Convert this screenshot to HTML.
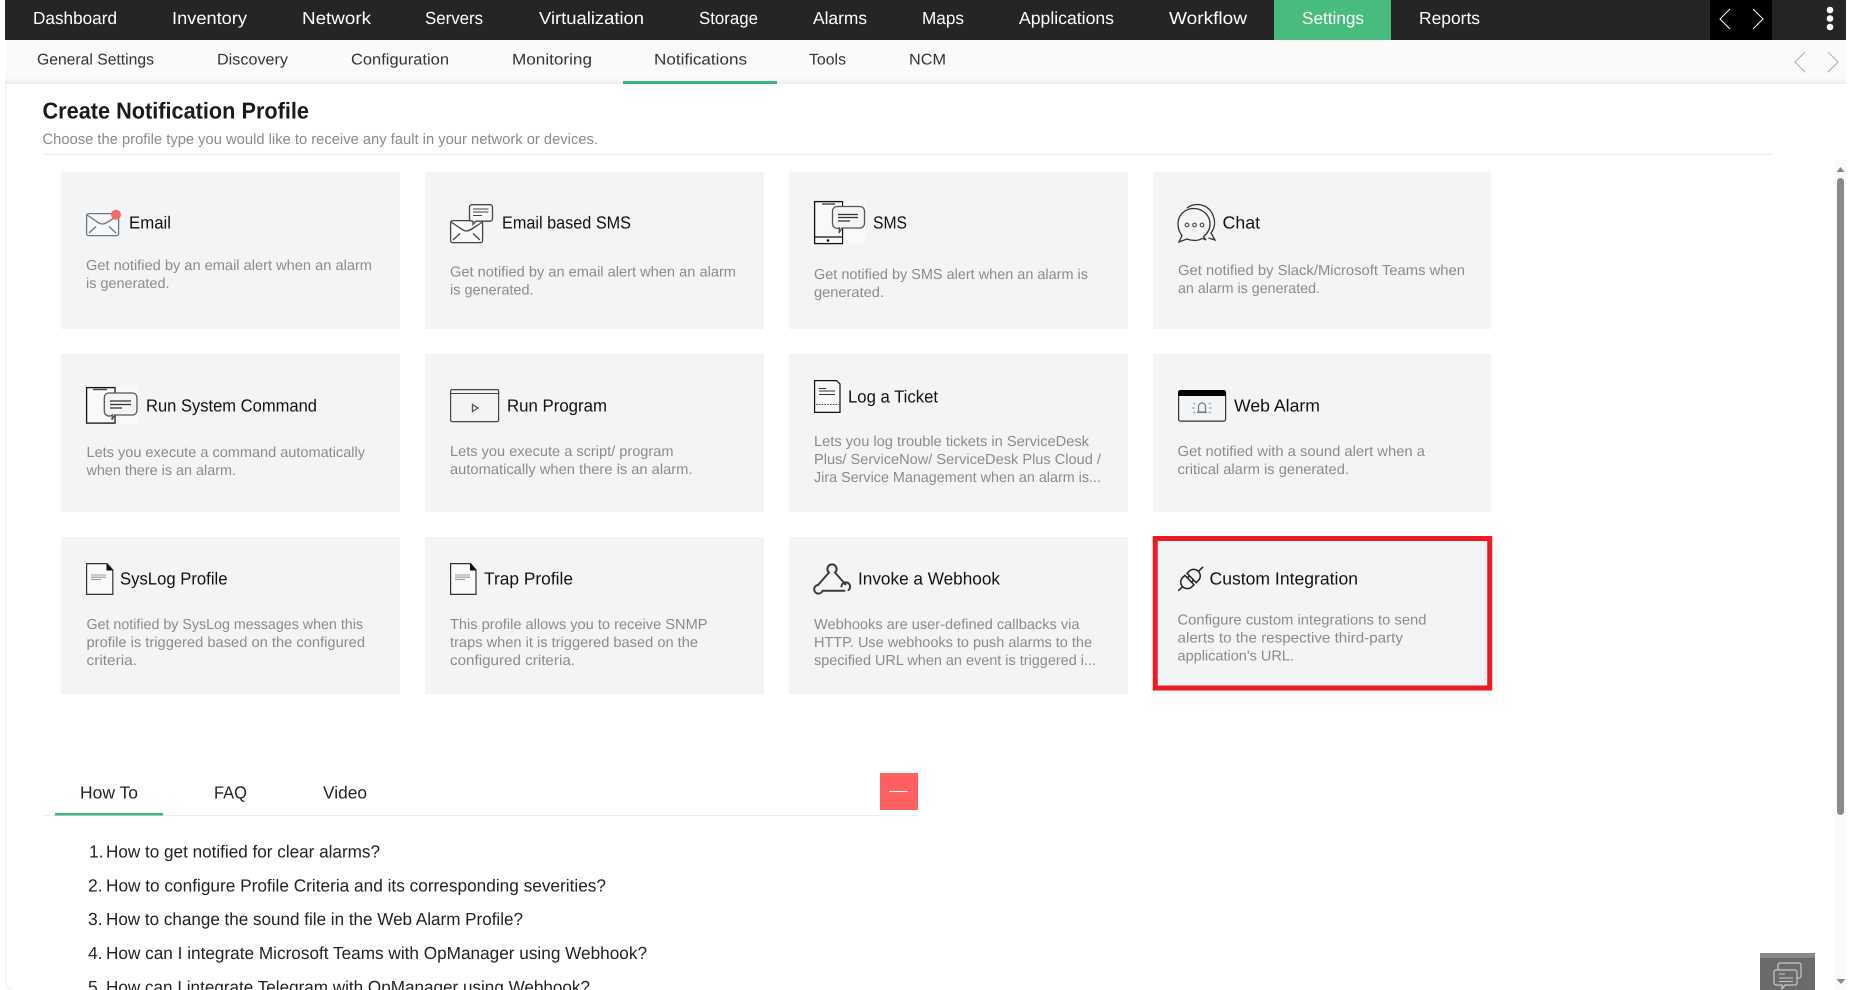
<!DOCTYPE html>
<html><head><meta charset="utf-8"><title>Create Notification Profile</title>
<style>
html,body{margin:0;padding:0;background:#fff;overflow:hidden}
svg{display:block}
text{font-family:"Liberation Sans",sans-serif;text-rendering:geometricPrecision}
.n{font-size:17.5px;fill:#fff}
.s{font-size:15.5px;fill:#333}
.t{font-size:17.5px;fill:#111}
.d{font-size:14.5px;fill:#8b8b8b}
.l{font-size:17.5px;fill:#222}
.i{fill:none;stroke:#333;stroke-width:1.3}
.g{fill:none;stroke:#6f7682;stroke-width:1.3}
</style></head><body>
<svg width="1852" height="990" viewBox="0 0 1852 990" xmlns="http://www.w3.org/2000/svg">
<rect width="1852" height="990" fill="#fff"/>
<path d="M5.5 84V980a10 10 0 0 0 8 10" fill="none" stroke="#f1f1f1"/>
<!-- top bar -->
<rect x="5" y="0" width="1841" height="40" fill="#252525"/>
<rect x="1274" y="0" width="117" height="40" fill="#48bb7f"/>
<rect x="1710" y="0" width="62" height="40" fill="#000"/>
<g class="n">
<text class="n" x="33" y="24" textLength="84" lengthAdjust="spacingAndGlyphs">Dashboard</text>
<text class="n" x="172" y="24" textLength="75" lengthAdjust="spacingAndGlyphs">Inventory</text>
<text class="n" x="302" y="24" textLength="69" lengthAdjust="spacingAndGlyphs">Network</text>
<text class="n" x="425" y="24" textLength="58" lengthAdjust="spacingAndGlyphs">Servers</text>
<text class="n" x="539" y="24" textLength="105" lengthAdjust="spacingAndGlyphs">Virtualization</text>
<text class="n" x="699" y="24" textLength="59" lengthAdjust="spacingAndGlyphs">Storage</text>
<text class="n" x="813" y="24" textLength="54" lengthAdjust="spacingAndGlyphs">Alarms</text>
<text class="n" x="922" y="24" textLength="42" lengthAdjust="spacingAndGlyphs">Maps</text>
<text class="n" x="1019" y="24" textLength="95" lengthAdjust="spacingAndGlyphs">Applications</text>
<text class="n" x="1169" y="24" textLength="78" lengthAdjust="spacingAndGlyphs">Workflow</text>
<text class="n" x="1302" y="24" textLength="62" lengthAdjust="spacingAndGlyphs">Settings</text>
<text class="n" x="1419" y="24" textLength="61" lengthAdjust="spacingAndGlyphs">Reports</text>
</g>
<path d="M1730 9l-10 10 10 10M1753 9l10 10-10 10" fill="none" stroke="#fff" stroke-width="1"/>
<circle cx="1830" cy="10" r="3.3" fill="#fff"/><circle cx="1830" cy="18.5" r="3.3" fill="#fff"/><circle cx="1830" cy="27" r="3.3" fill="#fff"/>
<!-- sub bar -->
<defs><linearGradient id="sh" x1="0" y1="0" x2="0" y2="1"><stop offset="0" stop-color="#fafafa"/><stop offset="1" stop-color="#ececec"/></linearGradient></defs>
<rect x="5" y="40" width="1841" height="38" fill="#fafafa"/>
<rect x="5" y="78" width="1841" height="6" fill="url(#sh)"/>
<rect x="623" y="81" width="154" height="3" fill="#3fb27a"/>
<text class="s" x="37" y="64.500" textLength="117" lengthAdjust="spacingAndGlyphs">General Settings</text>
<text class="s" x="217" y="64.500" textLength="71" lengthAdjust="spacingAndGlyphs">Discovery</text>
<text class="s" x="351" y="64.500" textLength="98" lengthAdjust="spacingAndGlyphs">Configuration</text>
<text class="s" x="512" y="64.500" textLength="80" lengthAdjust="spacingAndGlyphs">Monitoring</text>
<text class="s" x="654" y="64.500" textLength="93" lengthAdjust="spacingAndGlyphs">Notifications</text>
<text class="s" x="809" y="64.500" textLength="37" lengthAdjust="spacingAndGlyphs">Tools</text>
<text class="s" x="909" y="64.500" textLength="37" lengthAdjust="spacingAndGlyphs">NCM</text>
<path d="M1805 52l-10 10 10 10M1828 52l10 10-10 10" fill="none" stroke="#aaa" stroke-width="1"/>
<!-- heading -->
<text x="42.5" y="118.5" font-size="23" font-weight="700" fill="#1a1a1a" textLength="266.5" lengthAdjust="spacingAndGlyphs">Create Notification Profile</text>
<text class="d" x="42.5" y="144" textLength="555.5" lengthAdjust="spacingAndGlyphs" style="font-size:15px">Choose the profile type you would like to receive any fault in your network or devices.</text>
<rect x="42.5" y="154" width="1729.5" height="1" fill="#ececec"/>
<!-- cards -->
<g fill="#f3f4f6">
<rect x="61" y="172" width="339" height="157"/><rect x="425" y="172" width="339" height="157"/><rect x="789" y="172" width="339" height="157"/><rect x="1153" y="172" width="338" height="157"/>
<rect x="61" y="354" width="339" height="158"/><rect x="425" y="354" width="339" height="158"/><rect x="789" y="354" width="339" height="158"/><rect x="1153" y="354" width="338" height="158"/>
<rect x="61" y="537" width="339" height="157"/><rect x="425" y="537" width="339" height="157"/><rect x="789" y="537" width="339" height="157"/><rect x="1153" y="537" width="338" height="157"/>
</g>
<rect x="1155.25" y="538.5" width="334.5" height="149.5" fill="none" stroke="#ed1c24" stroke-width="5"/>
<!-- card text row 1 -->
<text class="t" x="129" y="228.500" textLength="42" lengthAdjust="spacingAndGlyphs">Email</text>
<text class="d" x="86" y="270" textLength="286" lengthAdjust="spacingAndGlyphs">Get notified by an email alert when an alarm</text>
<text class="d" x="86" y="288" textLength="83.5" lengthAdjust="spacingAndGlyphs">is generated.</text>
<text class="t" x="502" y="228.500" textLength="129" lengthAdjust="spacingAndGlyphs">Email based SMS</text>
<text class="d" x="450" y="276.500" textLength="286" lengthAdjust="spacingAndGlyphs">Get notified by an email alert when an alarm</text>
<text class="d" x="450" y="294.500" textLength="83.5" lengthAdjust="spacingAndGlyphs">is generated.</text>
<text class="t" x="873" y="228.500" textLength="34" lengthAdjust="spacingAndGlyphs">SMS</text>
<text class="d" x="814" y="279" textLength="274" lengthAdjust="spacingAndGlyphs">Get notified by SMS alert when an alarm is</text>
<text class="d" x="814" y="297" textLength="70" lengthAdjust="spacingAndGlyphs">generated.</text>
<text class="t" x="1222.5" y="228.500" textLength="37.5" lengthAdjust="spacingAndGlyphs">Chat</text>
<text class="d" x="1178" y="275" textLength="287" lengthAdjust="spacingAndGlyphs">Get notified by Slack/Microsoft Teams when</text>
<text class="d" x="1178" y="293" textLength="142" lengthAdjust="spacingAndGlyphs">an alarm is generated.</text>
<!-- row 2 -->
<text class="t" x="146" y="411.500" textLength="171" lengthAdjust="spacingAndGlyphs">Run System Command</text>
<text class="d" x="86.5" y="457" textLength="278.5" lengthAdjust="spacingAndGlyphs">Lets you execute a command automatically</text>
<text class="d" x="86.5" y="475" textLength="149.5" lengthAdjust="spacingAndGlyphs">when there is an alarm.</text>
<text class="t" x="507" y="411.500" textLength="100" lengthAdjust="spacingAndGlyphs">Run Program</text>
<text class="d" x="450" y="456" textLength="223.5" lengthAdjust="spacingAndGlyphs">Lets you execute a script/ program</text>
<text class="d" x="450" y="474" textLength="242.5" lengthAdjust="spacingAndGlyphs">automatically when there is an alarm.</text>
<text class="t" x="848" y="402.500" textLength="90" lengthAdjust="spacingAndGlyphs">Log a Ticket</text>
<text class="d" x="814" y="446" textLength="275" lengthAdjust="spacingAndGlyphs">Lets you log trouble tickets in ServiceDesk</text>
<text class="d" x="814" y="464" textLength="287" lengthAdjust="spacingAndGlyphs">Plus/ ServiceNow/ ServiceDesk Plus Cloud /</text>
<text class="d" x="814" y="482" textLength="287" lengthAdjust="spacingAndGlyphs">Jira Service Management when an alarm is...</text>
<text class="t" x="1234" y="411.500" textLength="86" lengthAdjust="spacingAndGlyphs">Web Alarm</text>
<text class="d" x="1177.5" y="456" textLength="247.5" lengthAdjust="spacingAndGlyphs">Get notified with a sound alert when a</text>
<text class="d" x="1177.5" y="474" textLength="171.5" lengthAdjust="spacingAndGlyphs">critical alarm is generated.</text>
<!-- row 3 -->
<text class="t" x="120" y="584.500" textLength="107.5" lengthAdjust="spacingAndGlyphs">SysLog Profile</text>
<text class="d" x="86.5" y="629" textLength="276.5" lengthAdjust="spacingAndGlyphs">Get notified by SysLog messages when this</text>
<text class="d" x="86.5" y="647" textLength="278.5" lengthAdjust="spacingAndGlyphs">profile is triggered based on the configured</text>
<text class="d" x="86.5" y="665" textLength="50.5" lengthAdjust="spacingAndGlyphs">criteria.</text>
<text class="t" x="484" y="584.500" textLength="89" lengthAdjust="spacingAndGlyphs">Trap Profile</text>
<text class="d" x="450" y="629" textLength="257.5" lengthAdjust="spacingAndGlyphs">This profile allows you to receive SNMP</text>
<text class="d" x="450" y="647" textLength="248" lengthAdjust="spacingAndGlyphs">traps when it is triggered based on the</text>
<text class="d" x="450" y="665" textLength="125" lengthAdjust="spacingAndGlyphs">configured criteria.</text>
<text class="t" x="858" y="584.500" textLength="142" lengthAdjust="spacingAndGlyphs">Invoke a Webhook</text>
<text class="d" x="814" y="629" textLength="265.5" lengthAdjust="spacingAndGlyphs">Webhooks are user-defined callbacks via</text>
<text class="d" x="814" y="647" textLength="278" lengthAdjust="spacingAndGlyphs">HTTP. Use webhooks to push alarms to the</text>
<text class="d" x="814" y="665" textLength="282" lengthAdjust="spacingAndGlyphs">specified URL when an event is triggered i...</text>
<text class="t" x="1209.5" y="584.500" textLength="148.5" lengthAdjust="spacingAndGlyphs">Custom Integration</text>
<text class="d" x="1177.5" y="624.7" textLength="249" lengthAdjust="spacingAndGlyphs">Configure custom integrations to send</text>
<text class="d" x="1177.5" y="642.7" textLength="225.5" lengthAdjust="spacingAndGlyphs">alerts to the respective third-party</text>
<text class="d" x="1177.5" y="660.7" textLength="116.5" lengthAdjust="spacingAndGlyphs">application's URL.</text>
<!-- icons: email -->
<rect x="86.6" y="213.6" width="32" height="22" rx="2" fill="#f7f8fa" stroke="#6f7682" stroke-width="1.3"/>
<path class="g" d="M87 215c8 5 12 9 15.500 9s8-4 16-9M89 233l7-6.500M116 233l-7-6.500"/>
<circle cx="116" cy="214.700" r="5" fill="#f56b6b"/>
<!-- email sms -->
<rect x="450.600" y="220.600" width="32" height="22" rx="2" fill="#f7f8fa" stroke="#444" stroke-width="1.300"/>
<path d="M451 222c8 5 12 9 15.500 9s8-4 16-9M453 240l7-6.500M480 240l-7-6.500" fill="none" stroke="#444" stroke-width="1.300"/>
<path d="M472 204.700h18a2.500 2.500 0 0 1 2.500 2.500v11.500a2.500 2.500 0 0 1-2.500 2.500h-14l-3 3v-3h-1a2.500 2.500 0 0 1-2.500-2.500v-11.500a2.500 2.500 0 0 1 2.500-2.500z" fill="#f7f8fa" stroke="#444" stroke-width="1.300"/>
<path d="M473 209h15.500M473 212h15.500M473 215.500h9" stroke="#444" stroke-width="1.100" fill="none"/>
<!-- sms -->
<rect x="814.600" y="201.600" width="28" height="42" fill="#f9f9fa" stroke="#111" stroke-width="1.300"/>
<path d="M822 204h13" stroke="#444" stroke-width="1.400"/><path d="M815 237h27" stroke="#111" stroke-width="1.200"/><circle cx="828" cy="240.500" r="1.300" fill="#111"/>
<rect x="843.300" y="201" width="21.700" height="43" fill="#f9f9fa"/>
<path d="M837 206.500h23a4.500 4.500 0 0 1 4.500 4.500v12.500a4.500 4.500 0 0 1-4.500 4.500h-18l-3 5 .5-5a5 5 0 0 1-7-4.500v-12.500a4.500 4.500 0 0 1 4.500-4.500z" fill="#f5f5f6" stroke="#555" stroke-width="1.300"/>
<path d="M838 214.500h20M838 217.500h20M838 221h12" stroke="#333" stroke-width="1.200" fill="none"/>
<!-- chat -->
<path class="i" d="M1187 208c8-6 20-4 25 5 4 8 3 15-1 20l4 7-6.500-2"/>
<path d="M1193.500 208.500c-9 0-15.500 7-15.500 15.500 0 5 2 9 4 11.500l-3 6.500 8-3c5 2 11 2 15-.5 1 0 4 1.500 4 1.500l-2.500-3.500c4-3 6.500-7.500 6.500-12.500 0-8.500-7-15.500-16.500-15.500z" fill="#f3f4f6" stroke="#333" stroke-width="1.300"/>
<g fill="none" stroke="#555" stroke-width="1.200"><circle cx="1187" cy="225" r="1.800"/><circle cx="1194.500" cy="225" r="1.800"/><circle cx="1202" cy="225" r="1.800"/></g>
<!-- run system -->
<rect x="86.600" y="387.600" width="28.500" height="35.500" fill="#f9f9fa" stroke="#111" stroke-width="1.300"/>
<path d="M93 389.500h14" stroke="#444" stroke-width="1.400"/>
<rect x="115.800" y="387" width="22.200" height="37" fill="#f9f9fa"/>
<path d="M108.500 393h24a4.500 4.500 0 0 1 4.500 4.500v13a4.500 4.500 0 0 1-4.500 4.500h-18l-2.500 5 .3-5a5 5 0 0 1-8-4.500v-13a4.500 4.500 0 0 1 4.200-4.500z" fill="#f5f5f6" stroke="#555" stroke-width="1.300"/>
<path d="M110 401h21M110 404.500h21M110 408h12" stroke="#333" stroke-width="1.200" fill="none"/>
<!-- run program -->
<rect x="450.600" y="389.600" width="48" height="32" rx="1.500" fill="#f3f4f6" stroke="#444" stroke-width="1.200"/>
<path d="M451 393.500h47" stroke="#444" stroke-width="1"/>
<path d="M472.500 404.500l5.500 3.500-5.500 3.500z" fill="none" stroke="#555" stroke-width="1.300"/>
<!-- log a ticket -->
<path d="M814.600 380.600h22l3.400 3.400v28.400h-25.400z" fill="#f8f9fa" stroke="#111" stroke-width="1.200"/>
<path d="M819 388.500h7M819 391h16M819 394.500h16" stroke="#333" stroke-width="1.100" fill="none"/>
<path d="M816 404.500h23" stroke="#444" stroke-width="1" stroke-dasharray="1.600 1.200"/>
<!-- web alarm -->
<rect x="1178.600" y="390.600" width="47" height="30.500" rx="2" fill="#f3f4f6" stroke="#333" stroke-width="1.200"/>
<path d="M1178 396v-3.500a2.500 2.500 0 0 1 2.500-2.500h43a2.500 2.500 0 0 1 2.500 2.500v3.500z" fill="#000"/>
<path d="M1198.500 412v-5.500a3.500 3.500 0 0 1 7 0v5.500zM1197 412.500h10" fill="none" stroke="#7a808a" stroke-width="1.300"/>
<path d="M1195 404l-1.500-1M1209 404l1.500-1M1194.500 408h-2M1209.500 408h2M1195 412l-1.500 1M1209 412l1.500 1" stroke="#8a9098" stroke-width="1.200"/>
<!-- syslog -->
<path d="M86.600 563.600h20.400l5.800 6.400v24.400h-26.200z" fill="#f9f9fa" stroke="#333" stroke-width="1.200"/>
<path d="M106.500 563l6.800 7.500h-6.800z" fill="#111"/>
<path d="M91 575h15M91 577.200h15" stroke="#999" stroke-width="1.100"/><path d="M91 579.500h10" stroke="#999" stroke-width="1.100"/>
<!-- trap -->
<path d="M450.600 563.600h20l5.400 6.400v24.400h-25.400z" fill="#f9f9fa" stroke="#333" stroke-width="1.200"/>
<path d="M470 563l6.500 7.500h-6.500z" fill="#111"/>
<path d="M455 575h15M455 577.200h15" stroke="#999" stroke-width="1.100"/><path d="M455 579.500h10" stroke="#999" stroke-width="1.100"/>
<!-- webhook -->
<g fill="none" stroke="#3a3a3a" stroke-width="2" stroke-linecap="round">
<path d="M829 572.500a4.600 4.600 0 1 1 6 0l10.500 12"/>
<path d="M829 572.500l-11 12.500"/>
<path d="M818 585a4.300 4.300 0 1 0 4.500 5.800h22"/>
<path d="M848.500 590a4.300 4.300 0 1 0-7-3.500"/>
</g>
<!-- custom integration -->
<g transform="rotate(-44 1190.500 579)" fill="none" stroke="#222" stroke-width="1.500">
<path d="M1189 572.500h-3a6.500 6.500 0 0 0 0 13h3zM1192 572.500h3a6.500 6.500 0 0 1 0 13h-3z"/>
<path d="M1173.500 579h6M1201.500 579h6.500"/>
<path d="M1189 576h3M1189 582h3"/>
</g>
<!-- tabs -->
<text class="l" x="80" y="798.500" textLength="58" lengthAdjust="spacingAndGlyphs">How To</text>
<text class="l" x="214" y="798.500" textLength="33" lengthAdjust="spacingAndGlyphs">FAQ</text>
<text class="l" x="323" y="798.500" textLength="44" lengthAdjust="spacingAndGlyphs">Video</text>
<rect x="43" y="815" width="875" height="1" fill="#eee"/>
<rect x="55" y="813" width="108" height="2.500" fill="#3fb27a"/>
<rect x="880" y="773" width="38" height="37" fill="#ff6060"/>
<rect x="889" y="791" width="18.500" height="1" fill="#fff"/>
<!-- list -->
<text class="l" x="89" y="857.500">1.</text><text class="l" x="106" y="857.500" textLength="274" lengthAdjust="spacingAndGlyphs">How to get notified for clear alarms?</text>
<text class="l" x="88" y="891.500">2.</text><text class="l" x="106" y="891.500" textLength="500" lengthAdjust="spacingAndGlyphs">How to configure Profile Criteria and its corresponding severities?</text>
<text class="l" x="88" y="925">3.</text><text class="l" x="106" y="925" textLength="417" lengthAdjust="spacingAndGlyphs">How to change the sound file in the Web Alarm Profile?</text>
<text class="l" x="88" y="959">4.</text><text class="l" x="106" y="959" textLength="541" lengthAdjust="spacingAndGlyphs">How can I integrate Microsoft Teams with OpManager using Webhook?</text>
<text class="l" x="88" y="993">5.</text><text class="l" x="106" y="993" textLength="484" lengthAdjust="spacingAndGlyphs">How can I integrate Telegram with OpManager using Webhook?</text>
<!-- scrollbar -->
<rect x="1835" y="160" width="11" height="830" fill="#fafafa"/>
<rect x="1837" y="178" width="7" height="637" rx="3.500" fill="#8a8a8a"/>
<path d="M1840.500 167l4 5h-8z" fill="#8a8a8a"/>
<path d="M1836.500 979h9l-4.500 5z" fill="#8a8a8a"/>
<!-- chat widget -->
<rect x="1760" y="953" width="55" height="37" fill="#6b6b6b"/>
<rect x="1760" y="953" width="55" height="5" fill="#8a8a8a"/>
<path d="M1778 970v-5a2 2 0 0 1 2-2h19a2 2 0 0 1 2 2v11a2 2 0 0 1-2 2h-2" fill="none" stroke="#c8c8c8" stroke-width="1.200"/>
<path d="M1776 970h19a2 2 0 0 1 2 2v11a2 2 0 0 1-2 2h-10l-3 4v-4h-6a2 2 0 0 1-2-2v-11a2 2 0 0 1 2-2z" fill="#6b6b6b" stroke="#c8c8c8" stroke-width="1.200"/>
<path d="M1779 974h6M1779 978h14M1779 981.500h14" stroke="#c8c8c8" stroke-width="1.100"/>
</svg>
</body></html>
